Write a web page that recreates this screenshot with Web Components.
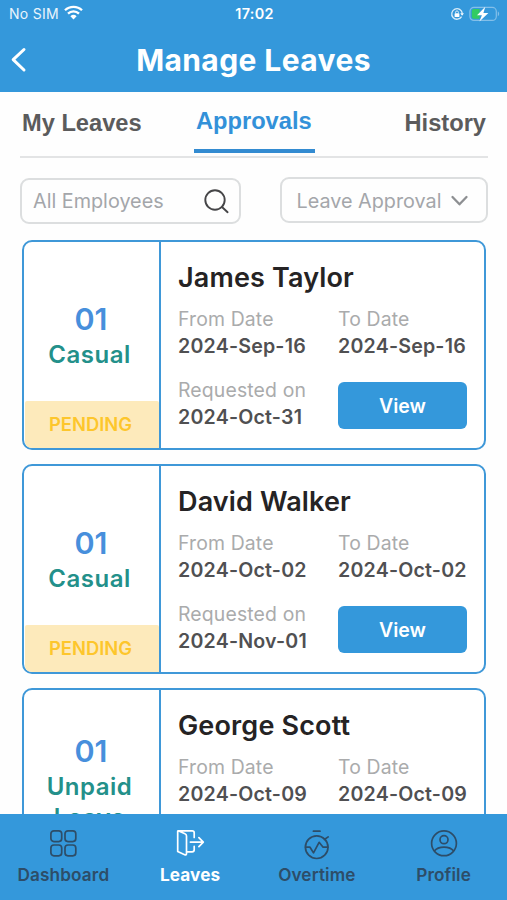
<!DOCTYPE html>
<html lang="en">
<head>
<meta charset="utf-8">
<title>Manage Leaves</title>
<style>
html,body{margin:0;height:100%;overflow:hidden;background:#fefefe;font-family:Inter,"Liberation Sans",sans-serif}
</style>
</head>
<body>
<leave-app></leave-app>
<script>
const define = (name, html) => customElements.define(name, class extends HTMLElement {
  constructor() {
    super();
    const t = document.createElement('template');
    t.innerHTML = html;
    this.attachShadow({mode: 'open'}).append(t.content.cloneNode(true));
  }
});

define('status-bar', `
<style>
:host{display:grid;grid-template-columns:1fr auto 1fr;align-items:center;height:28px;padding:0 7px 0 9px;color:#fff;line-height:28px}
.l,.r{display:flex;align-items:center}
.l{font-size:14px;letter-spacing:.3px;gap:5px;color:#e9f4fc}
.t{font-size:14.4px;font-weight:600;letter-spacing:.3px}
.r{justify-content:flex-end;gap:5px}
svg{display:block}
.w{margin-top:-3px}
</style>
<div class="l"><span>No SIM</span>
<svg class="w" width="19" height="15" viewBox="0 0 19 15" fill="none" stroke="#fff" stroke-width="2.3"><path d="M1 5.3a12.2 12.2 0 0 1 17 0M4 8.6a7.8 7.8 0 0 1 11 0"/><path d="M6.4 11.2a4.5 4.5 0 0 1 6.2 0L9.5 14.4z" fill="#fff" stroke="none"/></svg></div>
<div class="t">17:02</div>
<div class="r">
<svg width="14" height="14" viewBox="0 0 14 14" fill="none" stroke="#d8ecf9" stroke-width="1.3"><path d="M11.6 9.6A5.3 5.3 0 1 1 12.3 6.4"/><path d="M10.3 6.2h3.6l-1.8 2.5z" fill="#fff" stroke="none"/><rect x="4.6" y="6.3" width="4.8" height="3.7" rx=".6" fill="#fff" stroke="none"/><path d="M5.6 6.6V5.3a1.4 1.4 0 0 1 2.8 0v1.3" stroke-width="1"/></svg>
<svg width="31" height="16" viewBox="0 0 31 16"><rect x=".9" y="1.4" width="26.4" height="13" rx="4" fill="none" stroke="#83bfe9" stroke-width="1.2"/><path d="M4.8 3.1h5.8v9.6H4.8a2 2 0 0 1-2-2V5.1a2 2 0 0 1 2-2z" fill="#32cb63"/><path d="M28.8 5.6c1.8.6 1.8 4 0 4.6z" fill="#83bfe9"/><path d="M16.3.8 8 9.2h4.9l-2.5 6.4L19.4 7h-5z" fill="#fff"/></svg>
</div>`);

define('title-bar', `
<style>
:host{display:grid;grid-template-columns:40px 1fr 40px;align-items:center;height:64px;color:#fff}
svg{display:block;margin-left:10px}
h1{margin:0;font-size:30px;line-height:64px;font-weight:700;letter-spacing:.4px;text-align:center}
</style>
<svg width="18" height="26" viewBox="0 0 18 26" fill="none" stroke="#fff" stroke-width="3" stroke-linecap="round" stroke-linejoin="round"><path d="M14 2.5 3.2 12.7 14 23"/></svg>
<h1><slot></slot></h1>`);

define('tab-item', `
<style>
:host{display:block;box-sizing:border-box;height:60px;padding-top:16px;line-height:30px;color:#5b5b5c}
:host([active]){padding:14px 3px 0 2px;height:61px;color:#3391d9;border-bottom:4px solid #338bd1}
:host(:last-child){margin-left:auto}
</style><slot></slot>`);

define('tab-strip', `
<style>
:host{display:grid;grid-template-columns:172px auto 1fr;box-sizing:border-box;height:66px;margin:0 19px 0 20px;padding:0 2px;border-bottom:2px solid #e3e4e5;font:700 23.65px "Liberation Sans",Arial,sans-serif}
</style><slot></slot>`);

define('filter-box', `
<style>
:host{display:flex;align-items:center;justify-content:space-between;box-sizing:border-box;border:2px solid #dcdedf;border-radius:9px;height:46px;color:#a4a6aa;font-size:19.8px;line-height:24px}
</style><slot></slot><slot name="icon"></slot>`);

define('labelled-date', `
<style>
:host{display:block;white-space:nowrap}
div{color:#aaabac;font-size:19.4px;letter-spacing:.15px;line-height:27px}
b{display:block;color:#505052;font-size:19.6px;font-weight:600;letter-spacing:.2px;line-height:27px}
</style><div><slot></slot></div><b><slot name="date"></slot></b>`);

define('view-button', `
<style>
:host{display:block;width:129px;height:47px;border-radius:6px;background:#3498db;color:#fff;font-size:19.5px;font-weight:600;line-height:48px;text-align:center}
</style><slot></slot>`);

customElements.define('leave-card', class extends HTMLElement {
  connectedCallback() {
    const a = n => this.getAttribute(n) || '';
    const request = a('requested') ? `
<labelled-date>Requested on<span slot="date">${a('requested')}</span></labelled-date>
<view-button>View</view-button>` : '';
    this.attachShadow({mode: 'open'}).innerHTML = `
<style>
:host{display:grid;grid-template-columns:137px 1fr;box-sizing:border-box;height:210px;border:2.5px solid #3f98d8;border-radius:10px;overflow:hidden;background:#fff;flex:none}
.side{display:flex;flex-direction:column;border-right:2.5px solid #3f98d8}
.kind{flex:1;display:flex;flex-direction:column;justify-content:center;align-items:center;padding:25px 1px 0 0;text-align:center}
.n{font-size:30.5px;font-weight:600;color:#478fdc;line-height:41px}
.k{font-size:24px;font-weight:600;letter-spacing:.5px;color:#23908a;line-height:31px;max-width:110px;padding-right:3px}
.s{height:47px;background:#fdeabb;color:#fdc62c;font-size:18.4px;font-weight:600;line-height:46px;text-align:center;border-radius:2px 2px 0 6px;margin-left:1px;padding-right:3px}
.info{padding:20px 0 0 17px}
h2{margin:0;font-size:27px;font-weight:600;letter-spacing:.15px;line-height:32px;color:#252324}
.g{display:grid;grid-template-columns:160px auto;row-gap:17px;margin-top:12px}
view-button{margin-top:5px}
</style>
<div class="side"><div class="kind"><div class="n">${a('days')}</div><div class="k">${a('kind')}</div></div><div class="s">${a('status')}</div></div>
<div class="info"><h2>${a('name')}</h2><div class="g">
<labelled-date>From Date<span slot="date">${a('from')}</span></labelled-date>
<labelled-date>To Date<span slot="date">${a('to')}</span></labelled-date>${request}</div></div>`;
  }
});

define('nav-item', `
<style>
:host{display:flex;flex-direction:column;align-items:center;color:#2d4d68;font-size:17.2px;font-weight:600;letter-spacing:.12px;padding-top:14px}
:host([active]){color:#fff;font-weight:700}
.i{height:32px}
.t{line-height:29px}
</style><div class="i"><slot name="icon"></slot></div><div class="t"><slot></slot></div>`);

define('nav-bar', `
<style>
:host{display:grid;grid-template-columns:repeat(4,1fr);height:86px;background:#3498db}
</style><slot></slot>`);

define('leave-app', `
<style>
:host{display:flex;flex-direction:column;height:900px;width:507px;background:#fefefe}
header{background:#3498db;height:92px;flex:none}
main{flex:1;min-height:0;overflow:hidden;display:flex;flex-direction:column}
.filters{display:flex;justify-content:space-between;align-items:flex-start;margin:20px 19px 0 20px;flex:none}
.search{width:221px;padding:0 9px 0 11px}
.select{width:208px;padding:1px 17px 0 14.5px;margin-top:-1px}
.list{display:flex;flex-direction:column;gap:13.8px;padding:16.4px 21px 0 22px}
tab-strip{flex:none}
svg{display:block}
nav-bar{flex:none}
</style>
<header><status-bar></status-bar><title-bar>Manage Leaves</title-bar></header>
<main>
<tab-strip><tab-item>My Leaves</tab-item><tab-item active>Approvals</tab-item><tab-item>History</tab-item></tab-strip>
<div class="filters">
<filter-box class="search">All Employees<svg slot="icon" width="27" height="27" viewBox="0 0 27 27" fill="none" stroke="#454547" stroke-width="1.9" stroke-linecap="round"><circle cx="12" cy="12" r="9.7"/><path d="m19 19 5.6 5.2"/></svg></filter-box>
<filter-box class="select">Leave Approval<svg slot="icon" width="19" height="12" viewBox="0 0 19 12" fill="none" stroke="#8d8f92" stroke-width="2.3" stroke-linecap="round" stroke-linejoin="round"><path d="m2.5 2 7 7.3 7-7.3"/></svg></filter-box>
</div>
<div class="list">
<leave-card days="01" kind="Casual" status="PENDING" name="James Taylor" from="2024-Sep-16" to="2024-Sep-16" requested="2024-Oct-31"></leave-card>
<leave-card days="01" kind="Casual" status="PENDING" name="David Walker" from="2024-Oct-02" to="2024-Oct-02" requested="2024-Nov-01"></leave-card>
<leave-card days="01" kind="Unpaid Leave" name="George Scott" from="2024-Oct-09" to="2024-Oct-09"></leave-card>
</div>
</main>
<nav-bar>
<nav-item>Dashboard<svg slot="icon" width="30" height="30" viewBox="0 0 30 30" fill="none" stroke="#2d4d68" stroke-width="1.7"><rect x="2.9" y="2.8" width="10.8" height="10.8" rx="3"/><rect x="17" y="2.8" width="10.8" height="10.8" rx="3"/><rect x="2.9" y="17" width="10.8" height="10.8" rx="3"/><rect x="17" y="17" width="10.8" height="10.8" rx="3"/></svg></nav-item>
<nav-item active>Leaves<svg slot="icon" width="30" height="30" viewBox="0 0 30 30" fill="none" stroke="#fff" stroke-width="1.7" stroke-linecap="round" stroke-linejoin="round"><path d="M2.7 3v20.5l7 3.2q1.8.6 1.8-1.2V8q0-1.6-1.5-2.2L3.2 2.8h14q2 0 2 2v4.7M19.2 18.4v3.4q0 2-2 2h-5.4M15.4 14.1H28M23.9 9.6l4.4 4.5-4.4 4.5"/></svg></nav-item>
<nav-item>Overtime<svg slot="icon" width="30" height="32" viewBox="0 0 30 32" fill="none" stroke="#2d4d68" stroke-width="1.7" stroke-linecap="round" stroke-linejoin="round"><circle cx="14.7" cy="19.2" r="11.3"/><path d="M11.4 3.2H18M22.4 11.5l3.8-2.6M3.6 19.2H8l3.5 5.7 5.6-10.6 4 4.9h4.7"/></svg></nav-item>
<nav-item>Profile<svg slot="icon" width="30" height="30" viewBox="0 0 30 30" fill="none" stroke="#2d4d68" stroke-width="1.7"><circle cx="15" cy="15.3" r="12.4"/><circle cx="15" cy="11.7" r="4"/><path d="M5.3 23.1c4-5.4 15.4-5.4 19.4 0"/></svg></nav-item>
</nav-bar>`);
</script>
</body>
</html>
